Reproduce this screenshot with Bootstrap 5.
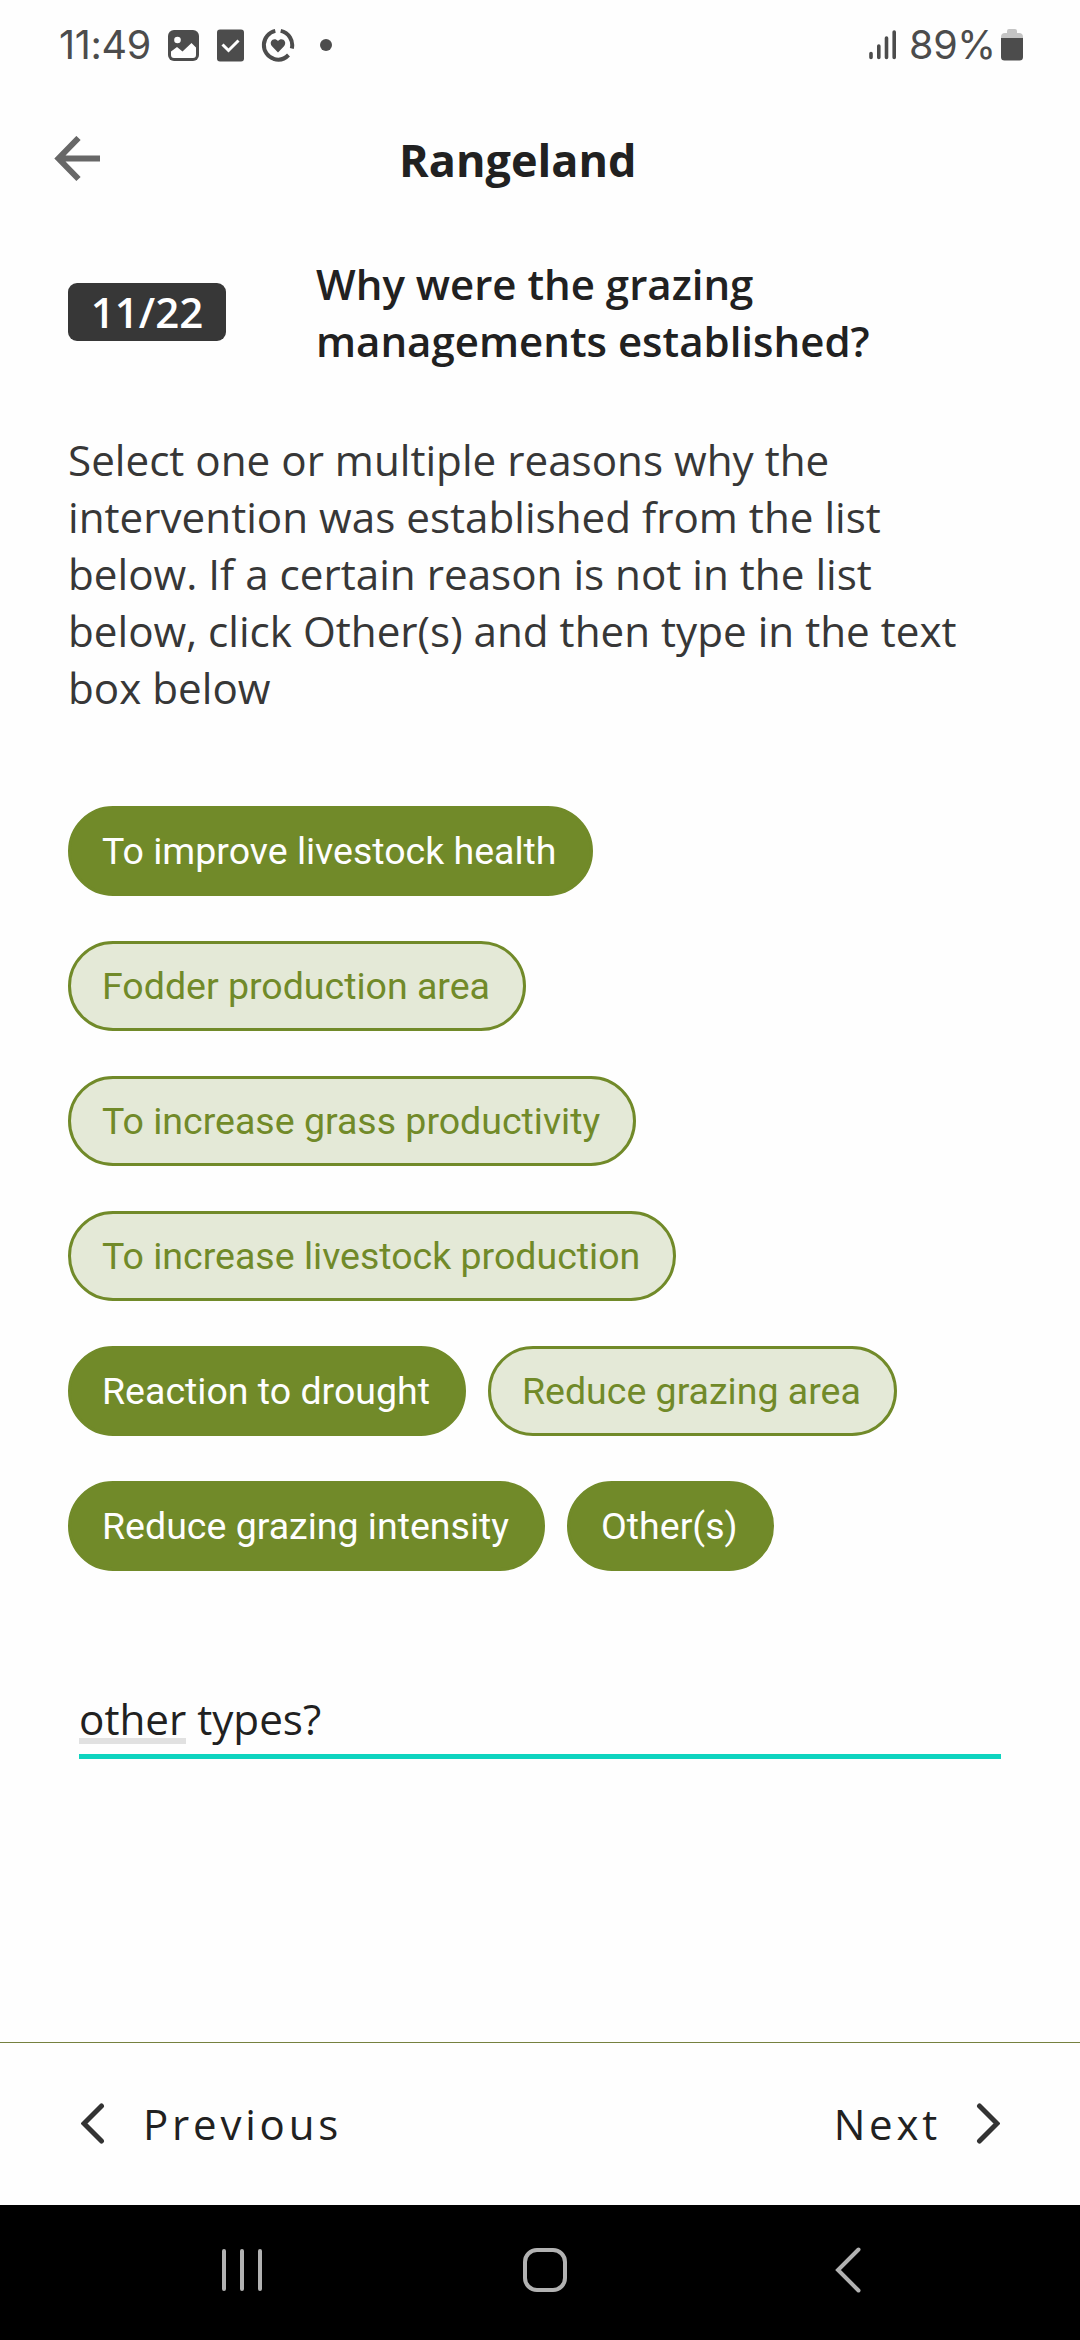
<!DOCTYPE html>
<html lang="en">
<head>
<meta charset="utf-8">
<meta name="viewport" content="width=device-width, initial-scale=1">
<title>Rangeland</title>
<link href="https://cdn.jsdelivr.net/npm/bootstrap@5.3.0/dist/css/bootstrap.min.css" rel="stylesheet">
<style>
  html, body { height: 2340px; overflow: hidden; }
  body { width: 1080px; font-family: "Open Sans", "Noto Sans", sans-serif; font-size: 42.19px; line-height: 57px; color: #212121; background: #fefefe; }
  svg { display: block; flex: none; }
  .status-bar { height: 90px; padding: 0 57px 0 59px; color: #4c4c4c; font-family: Inter, sans-serif; font-size: 39.5px; font-weight: 400; }
  .status-time { width: 109px; letter-spacing: -.3px; }
  .status-level { margin-left: 12px; width: 92px; letter-spacing: -.3px; white-space: nowrap; }
  .icon-check { margin-left: 18px; }
  .icon-health { margin-left: 17px; }
  .icon-more { margin-left: 25px; }
  .app-bar { height: 138px; padding: 0 54px; }
  .app-title { font-size: 45px; line-height: 62px; font-weight: 700; margin: 1px 0 0 299px; }
  .page-body { padding: 27px 68px 0; }
  .step-badge { width: 158px; height: 58px; margin-top: 28px; border-radius: 9px; background: #373737; font-size: 42px; font-weight: 600; line-height: 58px; padding: 0; }
  .question { margin: 0 0 0 90px; font-size: 42px; line-height: 57px; font-weight: 600; }
  .hint { margin: 62px 0 0; color: #373737; }
  .chip-list { margin-top: 90px; row-gap: 45px; }
  .chip-row { column-gap: 22px; }
  .chip { height: 90px; padding: 0 33px 0 31px; border: 3px solid #718a29; font-family: Roboto, sans-serif; font-size: 37.5px; line-height: 84px; background: #e4e9d7; color: #718a29; }
  .chip.active { background: #718a29; color: #fefefe; border-color: #718a29; }
  .other-field { margin: 119px 11px 0; height: 69px; border-bottom: 5px solid #0ed4bf; }
  .suggested { display: inline-block; height: 54px; border-bottom: 6px solid #e1e1e1; }
  .pager { height: 163px; border-top: 1px solid #75813f; padding: 0 80px 2px 81px; }
  .pager-btn { font-size: 42px; line-height: 57px; letter-spacing: 3.8px; color: #212121; }
  .system-nav { height: 135px; padding: 0 219px 5px 220px; }
  .nav-home { margin-left: -10px; }
</style>
<script src="https://cdn.jsdelivr.net/npm/bootstrap@5.3.0/dist/js/bootstrap.bundle.min.js"></script>
</head>
<body class="d-flex flex-column">
  <div class="status-bar d-flex align-items-center">
    <span class="status-time">11:49</span>
    <svg width="31" height="31" viewBox="0 0 31 31"><rect width="31" height="31" rx="6" fill="#4c4c4c"/><circle cx="9.5" cy="10" r="3.3" fill="#fefefe"/><path d="M3 21.500l6-4.500 5.500 4.500 9-8.500L28 17.500V25q0 3-3 3H6q-3 0-3-3z" fill="#fefefe"/></svg>
    <svg class="icon-check" width="27" height="33" viewBox="0 0 27 33"><rect y=".5" width="27" height="32" rx="3" fill="#4c4c4c"/><path d="M5.500 15.500l6 6L21.500 11.500" fill="none" stroke="#fefefe" stroke-width="3"/></svg>
    <svg class="icon-health" width="34" height="34" viewBox="0 0 34 34"><g fill="none" stroke="#4c4c4c" stroke-width="4"><path d="M14.300 2.900A14.500 14.500 0 0 0 13 30.900"/><path d="M19.700 2.900A14.500 14.500 0 0 1 30.800 20.500"/><path d="M12.500 30.800A14.500 14.500 0 0 0 27.500 27"/></g><path d="M17 24.500l-6-6.200c-4-5 2.500-9.600 6-5.200 3.500-4.400 10 .2 6 5.200z" fill="#4c4c4c"/></svg>
    <svg class="icon-more" width="12" height="12" viewBox="0 0 12 12"><circle cx="6" cy="6" r="6" fill="#4c4c4c"/></svg>
    <svg class="ms-auto" width="28" height="30" viewBox="0 0 28 30"><path d="M2 23.500v4M9.800 16v11.500M17.500 8v19.500M25.200 2v25.500" stroke="#4c4c4c" stroke-width="3.600" stroke-linecap="round"/></svg>
    <span class="status-level">89%</span>
    <svg width="22" height="32" viewBox="0 0 22 32"><path d="M6 4V2q0-2 2-2h6q2 0 2 2v2h2q4 0 4 4v4H0V8q0-4 4-4z" fill="#c4c4c4"/><path d="M0 9h22v19q0 3.500-3.500 3.500h-15Q0 31.500 0 28z" fill="#4c4c4c"/></svg>
  </div>

  <header class="app-bar d-flex align-items-center">
    <svg width="46" height="46" viewBox="0 0 46 46"><path d="M24.500 2L4.500 22.500 24.500 43M4.500 22.500H46" fill="none" stroke="#676767" stroke-width="6"/></svg>
    <h1 class="app-title">Rangeland</h1>
  </header>

  <main class="page-body flex-grow-1">
    <div class="d-flex align-items-start">
      <span class="badge step-badge">11/22</span>
      <h2 class="question">Why were the grazing<br>managements established?</h2>
    </div>
    <p class="hint">Select one or multiple reasons why the<br>intervention was established from the list<br>below. If a certain reason is not in the list<br>below, click Other(s) and then type in the text<br>box below</p>
    <div class="chip-list d-flex flex-column">
      <div class="chip-row d-flex"><button class="btn rounded-pill chip active">To improve livestock health</button></div>
      <div class="chip-row d-flex"><button class="btn rounded-pill chip">Fodder production area</button></div>
      <div class="chip-row d-flex"><button class="btn rounded-pill chip">To increase grass productivity</button></div>
      <div class="chip-row d-flex"><button class="btn rounded-pill chip">To increase livestock production</button></div>
      <div class="chip-row d-flex"><button class="btn rounded-pill chip active">Reaction to drought</button><button class="btn rounded-pill chip">Reduce grazing area</button></div>
      <div class="chip-row d-flex"><button class="btn rounded-pill chip active">Reduce grazing intensity</button><button class="btn rounded-pill chip active">Other(s)</button></div>
    </div>
    <div class="other-field"><span class="suggested">other</span> types?</div>
  </main>

  <footer class="pager d-flex align-items-center justify-content-between">
    <button class="btn p-0 border-0 pager-btn d-flex align-items-center">
      <svg class="me-auto" width="62" height="41" viewBox="0 0 62 41"><path d="M20.500 3L3 20.500l17.500 17.500" fill="none" stroke="#333" stroke-width="5" stroke-linecap="round"/></svg>Previous
    </button>
    <button class="btn p-0 border-0 pager-btn d-flex align-items-center">Next
      <svg width="59" height="41" viewBox="-36 0 59 41"><path d="M2.500 3L20 20.500l-17.500 17.500" fill="none" stroke="#333" stroke-width="5" stroke-linecap="round"/></svg>
    </button>
  </footer>

  <nav class="system-nav bg-black d-flex align-items-center justify-content-between">
    <svg width="44" height="44" viewBox="0 0 44 44"><path d="M4 3v38M22 3v38M40 3v38" stroke="#b2b2b2" stroke-width="4" stroke-linecap="round"/></svg>
    <svg class="nav-home" width="44" height="44" viewBox="0 0 44 44"><rect x="2" y="2" width="40" height="40" rx="12" fill="none" stroke="#b2b2b2" stroke-width="4"/></svg>
    <svg width="26" height="46" viewBox="0 0 26 46"><path d="M23.500 2.500L3 23l20.500 20.500" fill="none" stroke="#b2b2b2" stroke-width="4" stroke-linecap="round"/></svg>
  </nav>
</body>
</html>
